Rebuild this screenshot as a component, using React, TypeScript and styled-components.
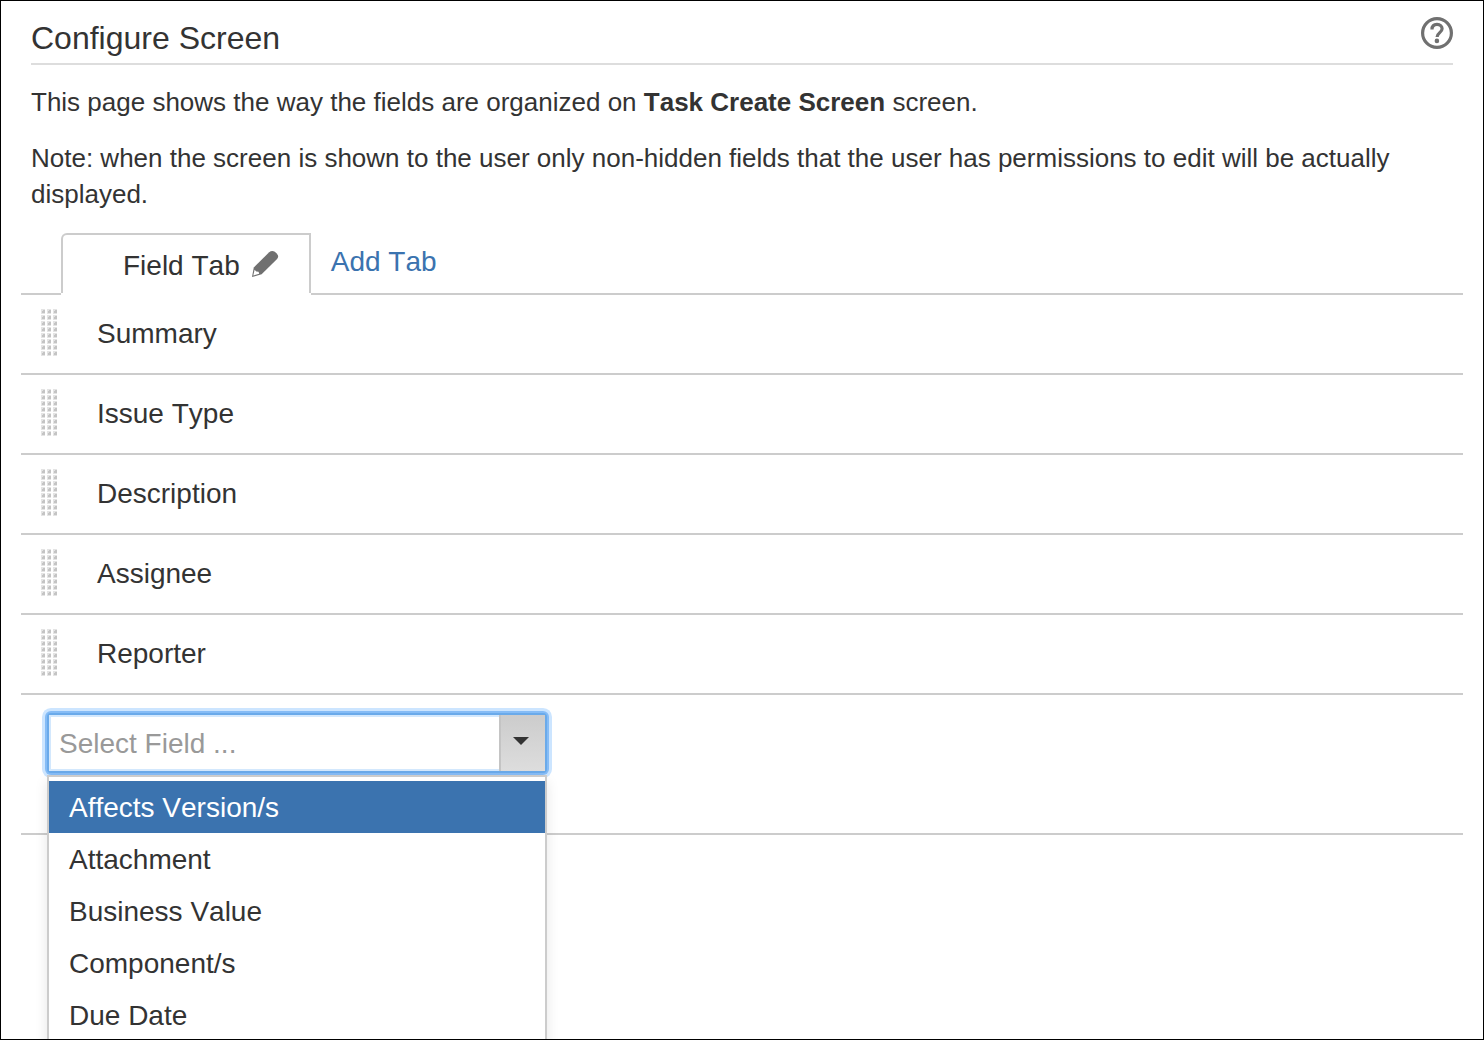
import React, { useState } from 'react';
import styled, { createGlobalStyle } from 'styled-components';

const GlobalStyle = createGlobalStyle`
  *, *::before, *::after { box-sizing: border-box; }
  body {
    margin: 0;
    background: #fff;
    color: #333;
    font-family: "Liberation Sans", Arial, sans-serif;
    font-kerning: none;
  }
  button, input { font: inherit; font-kerning: inherit; color: inherit; }
`;

const Page = styled.main`
  display: flex;
  flex-direction: column;
  height: 100vh;
  overflow: hidden;
  border: 1px solid #000;
`;

const Header = styled.header`
  display: flex;
  align-items: flex-start;
  justify-content: space-between;
  margin: 0 30px;
  padding-top: 16px;
  border-bottom: 2px solid #ddd;
`;

const Title = styled.h1`
  margin: 0;
  padding-bottom: 4px;
  font-size: 32px;
  line-height: 42px;
  font-weight: 400;
`;

const IconButton = styled.button`
  display: flex;
  padding: 0;
  border: 0;
  background: none;
  color: #707070;
  cursor: pointer;
`;

const Intro = styled.section`
  display: flex;
  flex-direction: column;
  gap: 20px;
  margin: 19px 30px 21px;
  font-size: 26px;
  line-height: 36px;
`;

const Paragraph = styled.p`
  margin: 0;
`;

const Panel = styled.section`
  margin: 0 20px;
  font-size: 28px;
`;

const TabStrip = styled.div`
  display: flex;
  padding-left: 40px;
  border-bottom: 2px solid #ccc;
`;

const Tab = styled.div`
  display: flex;
  align-items: center;
  gap: 11px;
  height: 60px;
  padding: 4px 30px 0 60px;
  border: 2px solid #ccc;
  border-bottom: 0;
  border-top-left-radius: 6px;
  background: #fff;
  box-shadow: 0 2px 0 #fff;
`;

const AddTab = styled.a`
  padding: 0 20px;
  line-height: 58px;
  color: #3b73af;
  text-decoration: none;
`;

const FieldList = styled.ul`
  margin: 0;
  padding: 0;
  list-style: none;
`;

const FieldRow = styled.li`
  display: flex;
  align-items: flex-start;
  gap: 40px;
  padding: 14px 20px;
  border-bottom: 2px solid #ccc;
  line-height: 50px;
`;

const AddFieldRow = styled.div`
  padding: 18px 26px 60px;
  border-bottom: 2px solid #ccc;
`;

const Picker = styled.div`
  position: relative;
  width: 500px;
  max-width: 100%;
`;

const Combo = styled.div`
  display: flex;
  height: 60px;
  border: 2px solid #6aaaea;
  border-radius: 4px;
  background: #fff;
  box-shadow: 0 0 0 2px #85bcf6, 0 0 0 5px #cce5ff;
`;

const ComboInput = styled.input`
  flex: 1;
  min-width: 0;
  padding: 2px 10px 0;
  border: 0;
  outline: 0;
  background: #fff;
  box-shadow: inset 0 2px #d3e8fd, inset 0 -2px #d3e8fd, inset 2px 0 #d3e8fd;
  &::placeholder { color: #999; opacity: 1; }
`;

const ComboToggle = styled.button`
  display: flex;
  align-items: center;
  justify-content: center;
  width: 46px;
  padding: 0 4px 4px 0;
  border: 0;
  border-left: 2px solid #c4c4c4;
  background: linear-gradient(#ccc, #ddd);
  color: #333;
  cursor: pointer;
`;

const Menu = styled.ul`
  position: absolute;
  top: 62px;
  left: 0;
  right: 0;
  margin: 0;
  padding: 4px 0;
  list-style: none;
  border: 2px solid #ccc;
  background: #fff;
  box-shadow: 0 6px 12px rgba(0, 0, 0, 0.1);
`;

const Option = styled.li<{ $active: boolean }>`
  padding: 2px 20px 0;
  line-height: 50px;
  background: ${(p) => (p.$active ? '#3b73af' : 'transparent')};
  color: ${(p) => (p.$active ? '#fff' : '#333')};
  cursor: pointer;
`;

const HelpIcon = () => (
  <svg width="32" height="32" viewBox="0 0 32 32" fill="none" stroke="currentColor" aria-hidden="true">
    <circle cx="16" cy="16" r="14.4" strokeWidth="3.2" />
    <path d="M11 12.4C11 9 12.9 7.3 16 7.3s5.1 1.9 5.1 4.5c0 3.8-5 3.9-5 8.2" strokeWidth="3.2" />
    <circle cx="15.9" cy="23.9" r="2.3" fill="currentColor" stroke="none" />
  </svg>
);

const PencilIcon = () => (
  <svg width="28" height="32" viewBox="0 0 28 32" aria-hidden="true">
    <path d="M2.8 17.4 18.2 2.2Q20.8.2 23.8 1.7 26.6 3.4 27.1 6q.2 1.7-1 3L10.6 24.3 1 27z" fill="currentColor" />
    <path d="M3.6 19.8 2.3 25.6l5.9-1.9-.6-2-2.3-.2z" fill="#fff" />
  </svg>
);

const GripIcon = () => (
  <svg width="16" height="48" viewBox="0 0 16 48" aria-hidden="true">
    {Array.from({ length: 24 }, (_, i) => {
      const x = (i % 3) * 6;
      const y = Math.floor(i / 3) * 6;
      return (
        <g key={i}>
          <rect x={x} y={y} width="4" height="5" fill="#e4e4e4" />
          <rect x={x + 1} y={y + 2} width="3" height="2" fill="#c4c4c4" />
          <rect x={x + 2} y={y + 1} width="2" height="3" fill="#c4c4c4" />
        </g>
      );
    })}
  </svg>
);

const fields = ['Summary', 'Issue Type', 'Description', 'Assignee', 'Reporter'];
const available = ['Affects Version/s', 'Attachment', 'Business Value', 'Component/s', 'Due Date'];

export default function App() {
  const [open, setOpen] = useState(true);
  const [active, setActive] = useState(0);
  const [value, setValue] = useState('');

  return (
    <>
      <GlobalStyle />
      <Page>
        <Header>
          <Title>Configure Screen</Title>
          <IconButton type="button" aria-label="Help"><HelpIcon /></IconButton>
        </Header>
        <Intro>
          <Paragraph>
            This page shows the way the fields are organized on <strong>Task Create Screen</strong> screen.
          </Paragraph>
          <Paragraph>
            Note: when the screen is shown to the user only non-hidden fields that the user has
            permissions to edit will be actually displayed.
          </Paragraph>
        </Intro>
        <Panel>
          <TabStrip>
            <Tab>
              <span>Field Tab</span>
              <IconButton type="button" aria-label="Rename tab"><PencilIcon /></IconButton>
            </Tab>
            <AddTab href="#add-tab">Add Tab</AddTab>
          </TabStrip>
          <FieldList>
            {fields.map((name) => (
              <FieldRow key={name}>
                <GripIcon />
                <span>{name}</span>
              </FieldRow>
            ))}
          </FieldList>
          <AddFieldRow>
            <Picker>
              <Combo>
                <ComboInput
                  type="text"
                  role="combobox"
                  aria-label="Select Field"
                  aria-expanded={open}
                  aria-controls="field-options"
                  autoComplete="off"
                  placeholder="Select Field ..."
                  value={value}
                  onChange={(e) => setValue(e.target.value)}
                />
                <ComboToggle type="button" aria-label="Show fields" onClick={() => setOpen(!open)}>
                  <svg width="16" height="8" viewBox="0 0 16 8" aria-hidden="true">
                    <path d="M0 0h16L8 8z" fill="currentColor" />
                  </svg>
                </ComboToggle>
              </Combo>
              {open && (
                <Menu id="field-options" role="listbox" aria-label="Fields">
                  {available.map((name, i) => (
                    <Option
                      key={name}
                      role="option"
                      aria-selected={i === active}
                      $active={i === active}
                      onMouseEnter={() => setActive(i)}
                      onClick={() => { setValue(name); setOpen(false); }}
                    >
                      {name}
                    </Option>
                  ))}
                </Menu>
              )}
            </Picker>
          </AddFieldRow>
        </Panel>
      </Page>
    </>
  );
}
